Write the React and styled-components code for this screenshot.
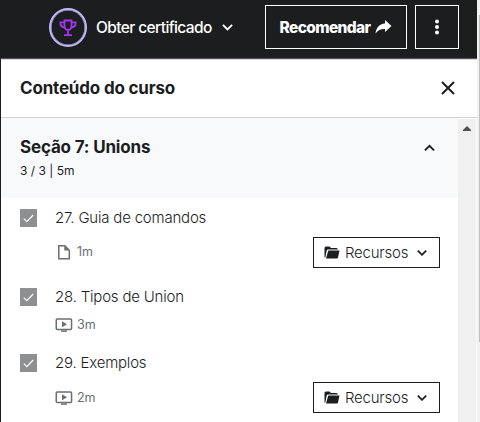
import React from "react";
import styled, { createGlobalStyle } from "styled-components";

const Global = createGlobalStyle`
  * { box-sizing: border-box; }
  body { margin: 0; background: #fff; color: #1c1d1f; overflow: hidden; font-family: "Inter", "Liberation Sans", sans-serif; }
  svg { display: block; flex: none; }
  button { font: inherit; color: inherit; background: none; padding: 0; border: 0; }
`;

const Page = styled.div`
  display: flex;
  width: 480px;
  height: 422px;
  overflow: hidden;
  background: #f0f0f0;
`;
const Main = styled.main`
  width: 477px;
  display: flex;
  flex-direction: column;
`;
const PageScrollbar = styled.div`
  width: 1px;
  height: 327px;
  margin: 15px 0 0 auto;
  background: #c1c1c1;
`;
const Header = styled.header`
  height: 58px;
  flex: none;
  background: #1c1d1f;
  color: #fff;
  display: flex;
  align-items: flex-start;
  padding: 5px 18px 0 49px;
`;
const Certificate = styled.button`
  display: flex;
  align-items: center;
  height: 44px;
  font-size: 15.5px;
  font-weight: 500;
  letter-spacing: -0.6px;
`;
const Badge = styled.span`
  display: flex;
  align-items: center;
  justify-content: center;
  width: 38px;
  height: 39px;
  margin-top: 1px;
  margin-right: 9px;
  border: 2px solid #c0b5f5;
  box-shadow: inset 0 0 0 0.5px #c0b5f5;
  border-radius: 50%;
`;
const CertificateLabel = styled.span`
  width: 126px;
  text-align: left;
  white-space: nowrap;
`;
const HeaderButton = styled.button`
  display: flex;
  align-items: center;
  justify-content: center;
  gap: 5px;
  width: ${(p) => p.$width}px;
  height: 44px;
  margin-left: ${(p) => (p.$first ? "auto" : "8px")};
  border: 1px solid #fff;
  font-size: 15.5px;
  font-weight: 800;
  letter-spacing: -0.65px;
`;
const Panel = styled.section`
  flex: 1;
  min-height: 0;
  display: flex;
  flex-direction: column;
  background: #fff;
  border-top: 1px solid #54565a;
  border-left: 1px solid #1c1d1f;
`;
const PanelHeader = styled.div`
  height: 59px;
  flex: none;
  display: flex;
  align-items: center;
  justify-content: space-between;
  padding: 0 22px 1px 19px;
  border-top: 1px solid #d1d7dc;
  border-bottom: 1px solid #d1d2d5;
`;
const Title = styled.h2`
  margin: 0;
  font-size: 17px;
  line-height: 22px;
  font-weight: 700;
  white-space: nowrap;
  letter-spacing: -0.18px;
`;
const ScrollArea = styled.div`
  display: flex;
  flex: 1;
  min-height: 0;
`;
const Content = styled.div`
  width: 457px;
`;
const Scrollbar = styled.div`
  flex: 1;
  background: #f0f0f0;
  margin-top: 1px;
  border-right: 1px solid #fafafa;
  display: flex;
  justify-content: center;
  padding-top: 7px;
`;
const SectionHeader = styled.div`
  height: 80px;
  display: flex;
  justify-content: space-between;
  padding: 18px 23px 0 19px;
  background: #f7f9fb;
`;
const Progress = styled.div`
  margin-top: 4px;
  font-size: 12px;
  line-height: 18px;
`;
const SectionToggle = styled.span`
  padding-top: 8px;
`;
const Lesson = styled.article`
  display: grid;
  grid-template-columns: 17px 1fr;
  column-gap: 18px;
  padding: 11px 18px 9px 19px;
`;
const Checkbox = styled.span`
  display: flex;
  align-items: center;
  justify-content: center;
  width: 17px;
  height: 18px;
  background: #8e8f90;
`;
const LessonTitle = styled.div`
  height: 28px;
  font-size: 15px;
  font-weight: 350;
  line-height: 18px;
  white-space: nowrap;
  letter-spacing: -0.2px;
`;
const Meta = styled.div`
  grid-column: 2;
  display: flex;
  align-items: center;
  justify-content: space-between;
  height: ${(p) => (p.$tall ? 31 : 18)}px;
`;
const Duration = styled.span`
  display: flex;
  align-items: center;
  gap: 4px;
  color: #6a6f73;
  font-size: 12.5px;
  line-height: 18px;
  letter-spacing: 0;
  padding-bottom: ${(p) => (p.$raised ? 2 : 0)}px;
`;
const Resources = styled.button`
  display: flex;
  align-items: center;
  width: 127px;
  height: 31px;
  padding-left: 10px;
  border: 1px solid #1c1d1f;
  font-size: 15px;
  font-weight: 350;
  letter-spacing: -0.22px;
`;
const ResourcesLabel = styled.span`
  width: 77px;
  padding-left: 5px;
  text-align: left;
`;

const Chevron = ({ up, w = 11 }) => (
  <svg width={w} height={w * 0.75} viewBox="0 0 12 9" fill="none" stroke="currentColor" strokeWidth="2.1">
    <path d={up ? "M1 7 6 2l5 5" : "M1 2l5 5 5-5"} />
  </svg>
);
const Trophy = () => (
  <svg width="18" height="18" viewBox="0 0 18 18" fill="none" stroke="#a435f0" strokeWidth="1.8">
    <path d="M5.500 1.500h7v5.300c0 2.300-1.300 4.200-3.500 4.200S5.500 9.100 5.500 6.800zM5.500 3.300H1.500v1.500C1.500 6.600 3 8.300 5.800 8.300M12.500 3.300h4v1.500C16.500 6.600 15 8.300 12.200 8.300M9 11v5M5 16.200h8" />
  </svg>
);
const Share = () => (
  <svg width="17" height="14" viewBox="0 0 17 14" fill="currentColor">
    <path d="M10 0 16.500 6 10 12V8.900C5.800 8.700 3 10 .5 13.500 1 8.500 4 3.600 10 3.400z" />
  </svg>
);
const More = () => (
  <svg width="4" height="16" viewBox="0 0 4 16" fill="currentColor">
    <circle cx="2" cy="2.500" r="2" /><circle cx="2" cy="8" r="2" /><circle cx="2" cy="13.500" r="2" />
  </svg>
);
const Close = () => (
  <svg width="14" height="14" viewBox="0 0 14 14" stroke="currentColor" strokeWidth="2">
    <path d="M1 1l12 12M13 1L1 13" />
  </svg>
);
const Check = () => (
  <svg width="11" height="9" viewBox="0 0 11 9" fill="none" stroke="#fff" strokeWidth="1.2">
    <path d="M.8 4.700 3.800 7.700 10.200 1" />
  </svg>
);
const FileIcon = () => (
  <svg width="18" height="16" viewBox="0 0 18 16" fill="none" stroke="#6a6f73" strokeWidth="1.5">
    <path d="M3.800 1.700h6l4.500 4.500v8.500H3.800z" /><path d="M9.300 1.500V6.500h5z" fill="#6a6f73" stroke="none" />
  </svg>
);
const VideoIcon = () => (
  <svg width="18" height="16" viewBox="0 0 18 16" fill="none" stroke="#6a6f73" strokeWidth="1.5">
    <rect x="1.250" y="2" width="15.300" height="10.500" rx="1" />
    <path d="M6 14.100h6" /><path d="M7 4.300v6l5-3z" fill="#6a6f73" stroke="none" />
  </svg>
);
const Folder = () => (
  <svg width="16" height="13" viewBox="0 0 16 13" fill="currentColor">
    <path d="M.5 11.500V2Q.5.500 2 .5h3.500L7 2h5.500q1.300 0 1.300 1.500H4.200Q3 3.500 2.700 4.600L1.300 11.500z" />
    <path d="M4.300 4.500H15.500L14 11.500q-.2 1-1.200 1H2z" />
  </svg>
);

const lessons = [
  { title: "27. Guia de comandos", time: "1m", file: true, resources: true },
  { title: "28. Tipos de Union", time: "3m" },
  { title: "29. Exemplos", time: "2m", resources: true },
];

export default function App() {
  return (
    <Page>
      <Global />
      <Main>
        <Header>
          <Certificate>
            <Badge><Trophy /></Badge>
            <CertificateLabel>Obter certificado</CertificateLabel>
            <Chevron />
          </Certificate>
          <HeaderButton $first $width={142}>Recomendar <Share /></HeaderButton>
          <HeaderButton $width={44}><More /></HeaderButton>
        </Header>
        <Panel>
          <PanelHeader>
            <Title>Conteúdo do curso</Title>
            <Close />
          </PanelHeader>
          <ScrollArea>
            <Content>
              <SectionHeader>
                <div>
                  <Title>Seção 7: Unions</Title>
                  <Progress>3 / 3 | 5m</Progress>
                </div>
                <SectionToggle><Chevron up /></SectionToggle>
              </SectionHeader>
              {lessons.map((l) => (
                <Lesson key={l.title}>
                  <Checkbox><Check /></Checkbox>
                  <LessonTitle>{l.title}</LessonTitle>
                  <Meta $tall={l.resources}>
                    <Duration $raised={l.file}>{l.file ? <FileIcon /> : <VideoIcon />}{l.time}</Duration>
                    {l.resources && (
                      <Resources>
                        <Folder />
                        <ResourcesLabel>Recursos</ResourcesLabel>
                        <Chevron w={10} />
                      </Resources>
                    )}
                  </Meta>
                </Lesson>
              ))}
            </Content>
            <Scrollbar>
              <svg width="8" height="5" viewBox="0 0 8 5"><path d="M4 0l4 4v1H0V4z" fill="#505050" /></svg>
            </Scrollbar>
          </ScrollArea>
        </Panel>
      </Main>
      <PageScrollbar />
    </Page>
  );
}
